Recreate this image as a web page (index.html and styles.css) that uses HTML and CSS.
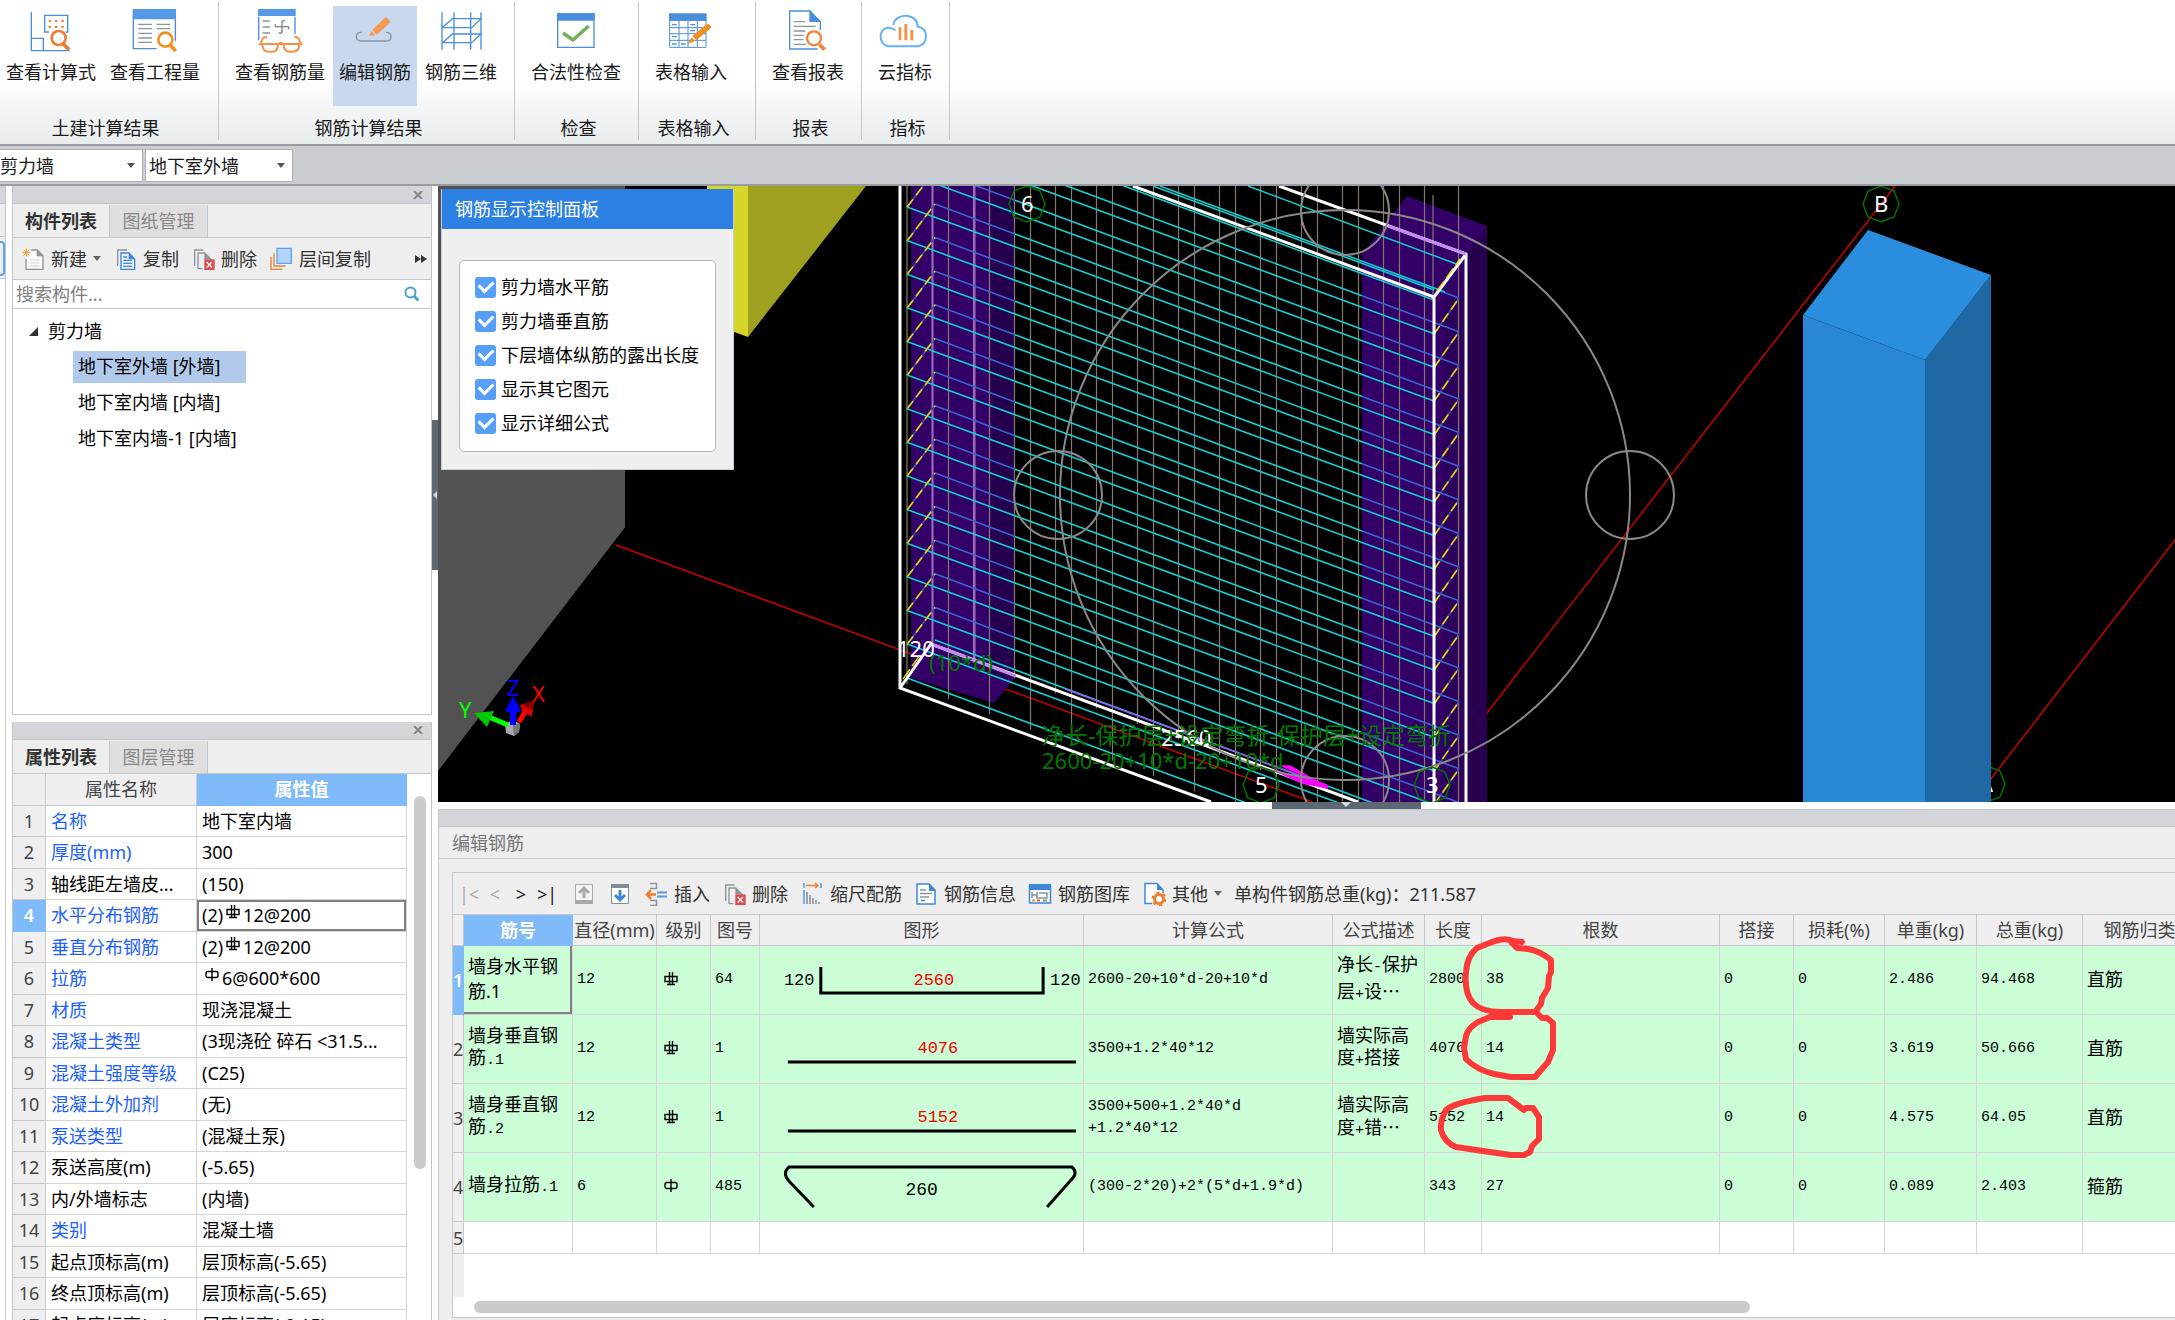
FILE: index.html
```html
<!DOCTYPE html>
<html lang="zh-CN">
<head>
<meta charset="utf-8">
<title>编辑钢筋</title>
<link rel="stylesheet" href="styles.css">
</head>
<body>
<svg class="defs" aria-hidden="true">
  <defs>
    <symbol id="bar-c" viewBox="0 0 14 16"><path d="M1 5.500H13V10.500H1ZM5.500 1V13.500M8.500 1V13.500M3 13.500H11" fill="none" stroke="#000" stroke-width="1.400"/></symbol>
    <symbol id="bar-a" viewBox="0 0 14 16"><rect x="1" y="4.500" width="12" height="6" rx="2" fill="none" stroke="#000" stroke-width="1.400"/><path d="M7 1V14" stroke="#000" stroke-width="1.400"/></symbol>
    <symbol id="delete" viewBox="573 201 72 72"><path d="M584 258V210H610M594 266V219H614L633 238V246M594 266H608" fill="none" stroke="#8b959c" stroke-width="4"/><path d="M613 217V238H633Z" fill="#8b959c"/><rect x="613" y="238" width="31" height="32" fill="#dc4b50"/><path d="M620 246L636 263M636 246L620 263" stroke="#fff" stroke-width="4"/></symbol>
  </defs>
</svg>
<div class="app">
  <header class="ribbon">
    <section class="group first">
      <div class="tools">
        <button class="tool"><svg viewBox="90 24 132 132"><path d="M97 36V152H212M97 115H133V152" fill="none" stroke="#4a8edb" stroke-width="4"/><path d="M150 96H137V46H206V96H200" fill="none" stroke="#4a8edb" stroke-width="4"/><path d="M149 60h7v6h-7zM168 60h7v6h-7zM187 60h7v6h-7zM149 78h7v6h-7zM168 78h7v6h-7zM187 78h7v6h-7z" fill="#ef7d32"/><circle cx="179" cy="114" r="21" fill="none" stroke="#ef7d32" stroke-width="8"/><path d="M193 132L210 149" stroke="#ef7d32" stroke-width="11"/></svg>查看计算式</button>
        <button class="tool"><svg viewBox="402 24 132 132"><path d="M403 50V146H473M529 50V122" fill="none" stroke="#4a8edb" stroke-width="4"/><path d="M401 27H531V58H401Z" fill="#5598e6"/><path d="M418 73H459M418 86H459M418 100H459M418 114H459M418 127H459M473 73H513M473 86H513" stroke="#8b959c" stroke-width="4"/><circle cx="499" cy="119" r="21" fill="#fff" stroke="#ef9020" stroke-width="8"/><path d="M514 136L530 153" stroke="#ef9020" stroke-width="11"/></svg>查看工程量</button>
      </div>
      <h2>土建计算结果</h2>
    </section>
    <section class="group">
      <div class="tools">
        <button class="tool"><svg viewBox="774 24 132 132"><path d="M776 50V120M885 50V102" stroke="#4a8edb" stroke-width="4"/><path d="M774 27H887V48H774Z" fill="#5598e6"/><path d="M788 63H810M788 81H810M788 99H810" stroke="#8b959c" stroke-width="4"/><path d="M854 64Q846 58 846 70V98M826 72Q824 82 834 80H860Q868 78 866 88M846 90Q846 104 836 98" fill="none" stroke="#75828a" stroke-width="4"/><path d="M801 111Q787 110 786 122L780 132H904L898 122Q897 110 883 111M787 134Q787 155 807 155H818Q833 155 834 134M851 134Q851 155 871 155H880Q897 154 898 134M833 134Q842 124 852 134" fill="none" stroke="#f5924a" stroke-width="6"/></svg>查看钢筋量</button>
        <button class="tool active"><svg viewBox="1059 24 132 132"><path d="M1086 97Q1069 96 1069 110Q1069 123 1086 123H1158Q1173 123 1173 110Q1173 97 1158 97" fill="none" stroke="#8b959c" stroke-width="4"/><path d="M1107 108L1114 93L1126 105ZM1117 90L1154 54Q1158 51 1162 55L1169 62Q1172 66 1169 69L1130 104Z" fill="#f59a52"/></svg>编辑钢筋</button>
        <button class="tool"><svg viewBox="1317 24 132 132"><path d="M1326 37V149M1362 37V149M1412 37V149M1443 37V149M1326 83L1357 56H1443L1415 83ZM1328 128L1357 102H1443L1415 128Z" fill="none" stroke="#4a8edb" stroke-width="4"/></svg>钢筋三维</button>
      </div>
      <h2>钢筋计算结果</h2>
    </section>
    <section class="group">
      <div class="tools"><button class="tool"><svg viewBox="225 24 132 132"><path d="M236 42H345V142H236Z" fill="#fff" stroke="#4a8edb" stroke-width="4"/><path d="M234 40H347V62H234Z" fill="#4a8edb"/><path d="M252 99L282 120L329 78" fill="none" stroke="#77b05c" stroke-width="11"/></svg>合法性检查</button></div>
      <h2>检查</h2>
    </section>
    <section class="group wide">
      <div class="tools"><button class="tool"><svg viewBox="567 24 132 132"><path d="M569 61H678V142H569ZM569 83H678M569 101H678M569 121H678M597 61V142M624 61V142M652 61V142" fill="none" stroke="#4a8edb" stroke-width="3"/><path d="M567 40H680V62H567Z" fill="#4a8edb"/><path d="M576 74H590M631 74H645M576 110H590M576 132H590M603 132H617M631 92H645" stroke="#4a8edb" stroke-width="4"/><path d="M624 131L634 112L646 123Z M637 108L678 74Q684 69 690 75T690 86L649 121Z" fill="#ef9020"/></svg>表格输入</button></div>
      <h2>表格输入</h2>
    </section>
    <section class="group">
      <div class="tools"><button class="tool"><svg viewBox="918 24 132 132"><path d="M1013 147H929V33H990L1021 65V90" fill="#fff" stroke="#4a8edb" stroke-width="4"/><path d="M988 31V66H1023Z" fill="#4a8edb"/><path d="M941 65H976M941 79H1007M941 93H976M941 106H971M941 119H971M941 133H978" stroke="#8b959c" stroke-width="4"/><circle cx="1002" cy="115" r="21" fill="#fff" stroke="#f0833c" stroke-width="7"/><path d="M1018 134L1034 149" stroke="#f0833c" stroke-width="11"/></svg>查看报表</button></div>
      <h2>报表</h2>
    </section>
    <section class="group">
      <div class="tools"><button class="tool"><svg viewBox="1206 24 132 132"><path d="M1243 91Q1228 80 1213 85Q1198 92 1199 112Q1201 134 1222 139H1310Q1335 134 1335 108Q1334 82 1310 80Q1310 52 1277 47Q1243 46 1236 75" fill="none" stroke="#66b0fb" stroke-width="6"/><path d="M1253 81H1261V121H1253ZM1270 72H1279V121H1270ZM1288 90H1297V121H1288Z" fill="#f5924a"/></svg>云指标</button></div>
      <h2>指标</h2>
    </section>
  </header>

  <div class="selectors">
    <label class="picker"><select aria-label="构件类型"><option>剪力墙</option></select></label>
    <label class="picker named"><select aria-label="构件名称"><option>地下室外墙</option></select></label>
  </div>

  <div class="workspace">
    <div class="edge"><i class="strip"></i><i class="edge-tabs"></i><i class="edge-tools"></i></div>

    <aside class="side">
      <section class="panel components">
        <div class="strip"><button class="close" aria-label="关闭"><svg viewBox="0 0 10 8"><path d="M1 0L9 8M9 0L1 8" stroke="#858585" stroke-width="2"/></svg></button></div>
        <nav class="tabs"><button class="tab on">构件列表</button><button class="tab">图纸管理</button></nav>
        <div class="side-tools">
          <button class="cmd"><svg viewBox="63 201 72 72"><path d="M94 210H112L129 227V268H78V236" fill="#f8f8f8" stroke="#8b959c" stroke-width="4"/><path d="M110 208V229H131Z" fill="#8b959c"/><path d="M88 240H118M88 249H118M88 258H118" stroke="#d5d8da" stroke-width="3"/><path d="M79 206V230M67 218H91M70 209L88 227M88 209L70 227" stroke="#fb9d2c" stroke-width="3"/></svg>新建<i class="caret"></i></button>
          <button class="cmd"><svg viewBox="339 201 72 72"><path d="M353 258V210H381" fill="none" stroke="#8b959c" stroke-width="4"/><path d="M363 219H387L404 237V268H363Z" fill="#e6f1fd" stroke="#3f86d8" stroke-width="4"/><path d="M386 218V238H405Z" fill="#3f86d8"/><path d="M370 231H381M370 241H396M370 250H396M370 259H396" stroke="#3f86d8" stroke-width="4"/></svg>复制</button>
          <button class="cmd"><svg><use href="#delete"/></svg>删除</button>
          <button class="cmd"><svg viewBox="810 201 72 72"><path d="M816 230V268H850M825 220V258H860" fill="none" stroke="#ef7d32" stroke-width="4"/><path d="M834 205H877V250H834Z" fill="#b3d5fb" stroke="#5aa2f2" stroke-width="4"/></svg>层间复制</button>
          <button class="more" aria-label="更多"><svg viewBox="0 0 12 8"><path d="M0 0L6 4L0 8ZM6 0L12 4L6 8Z" fill="#333"/></svg></button>
        </div>
        <label class="search"><input type="text" placeholder="搜索构件..." aria-label="搜索构件"><svg viewBox="0 0 16 16"><circle cx="6.500" cy="6.500" r="5" fill="none" stroke="#4fa0d0" stroke-width="2"/><path d="M10 10L14.500 14.500" stroke="#4fa0d0" stroke-width="3"/></svg></label>
        <div class="tree">
          <div class="node root"><svg viewBox="0 0 9 9"><path d="M9 0V9H0Z" fill="#333"/></svg>剪力墙</div>
          <div class="node leaf selected"><span>地下室外墙 [外墙]</span></div>
          <div class="node leaf"><span>地下室内墙 [内墙]</span></div>
          <div class="node leaf"><span>地下室内墙-1 [内墙]</span></div>
        </div>
      </section>

      <section class="panel properties">
        <div class="strip"><button class="close" aria-label="关闭"><svg viewBox="0 0 10 8"><path d="M1 0L9 8M9 0L1 8" stroke="#858585" stroke-width="2"/></svg></button></div>
        <nav class="tabs"><button class="tab on">属性列表</button><button class="tab">图层管理</button></nav>
        <div class="prop-body">
          <table class="props">
            <colgroup><col class="p-idx"><col class="p-name"><col></colgroup>
            <thead><tr><th></th><th>属性名称</th><th class="hot">属性值</th></tr></thead>
            <tbody>
              <tr><th>1</th><td class="key">名称</td><td>地下室内墙</td></tr>
              <tr><th>2</th><td class="key">厚度(mm)</td><td>300</td></tr>
              <tr><th>3</th><td>轴线距左墙皮...</td><td>(150)</td></tr>
              <tr><th class="hot">4</th><td class="key">水平分布钢筋</td><td class="current">(2)<svg class="grade"><use href="#bar-c"/></svg>12@200</td></tr>
              <tr><th>5</th><td class="key">垂直分布钢筋</td><td>(2)<svg class="grade"><use href="#bar-c"/></svg>12@200</td></tr>
              <tr><th>6</th><td class="key">拉筋</td><td><svg class="grade"><use href="#bar-a"/></svg>6@600*600</td></tr>
              <tr><th>7</th><td class="key">材质</td><td>现浇混凝土</td></tr>
              <tr><th>8</th><td class="key">混凝土类型</td><td>(3现浇砼 碎石 &lt;31.5...</td></tr>
              <tr><th>9</th><td class="key">混凝土强度等级</td><td>(C25)</td></tr>
              <tr><th>10</th><td class="key">混凝土外加剂</td><td>(无)</td></tr>
              <tr><th>11</th><td class="key">泵送类型</td><td>(混凝土泵)</td></tr>
              <tr><th>12</th><td>泵送高度(m)</td><td>(-5.65)</td></tr>
              <tr><th>13</th><td>内/外墙标志</td><td>(内墙)</td></tr>
              <tr><th>14</th><td class="key">类别</td><td>混凝土墙</td></tr>
              <tr><th>15</th><td>起点顶标高(m)</td><td>层顶标高(-5.65)</td></tr>
              <tr><th>16</th><td>终点顶标高(m)</td><td>层顶标高(-5.65)</td></tr>
              <tr><th>17</th><td>起点底标高(m)</td><td>层底标高(-9.15)</td></tr>
            </tbody>
          </table>
          <div class="v-track"><div class="v-thumb"></div></div>
        </div>
      </section>
    </aside>

    <div class="splitter"><button aria-label="收起侧栏"><svg viewBox="0 0 6 10"><path d="M5 1V9L1 5Z" fill="#d5d9dd"/></svg></button></div>

    <main class="content">
      <div class="viewport">
        <svg class="scene" viewBox="438 186 1737 616" preserveAspectRatio="xMinYMin slice">
          <defs>
            <g id="hoop">
              <path d="M935 204L1015 234M1362 363L1459 399" stroke="#3a66d0"/>
              <path d="M1015 234L1362 363M907 207L1434 401" stroke="#12cfd2"/>
              <path d="M907 241L935 204M1434 435L1459 399" stroke="#46549c"/>
              <path d="M907 241L935 204M1434 435L1459 399" stroke="#e6d80c" stroke-dasharray="10 5"/>
            </g>
            <g id="hoops4"><use href="#hoop"/><use href="#hoop" y="33.600"/><use href="#hoop" y="67.200"/><use href="#hoop" y="100.900"/></g>
            <path id="bar" d="M948.500 -400V699M932.500 -400V647"/>
            <g id="bars4"><use href="#bar"/><use href="#bar" x="41" y="15.400"/><use href="#bar" x="82" y="30.800"/><use href="#bar" x="123" y="46.200"/></g>
            <path id="bubble" d="M0 -18L13 -13L18 0L13 13L0 18L-13 13L-18 0L-13 -13Z" fill="none" stroke="#007200" stroke-width="1.500"/>
            <clipPath id="wall"><path d="M899 186H1133L1434 296L1466 254V802H899Z"/></clipPath>
          </defs>
          <path d="M438 186H625V527L438 771Z" fill="#525252"/><path d="M592 186H625V527L592 570Z" fill="#545454"/>
          <path d="M707 186H748V337L707 322Z" fill="#d6d62a"/><path d="M748 186H866L748 337Z" fill="#a0a020"/>
          <g stroke="#c80000" stroke-width="1.500"><path d="M616 545L1312 802M1895 186L1418 802M2175 540L1987 784"/></g>
          <use href="#bubble" x="1987" y="784"/><text x="1979" y="792" class="axis">A</text>
          <path d="M1803 315L1925 360V802H1803Z" fill="#2a87d5"/><path d="M1925 360L1991 275V802H1925Z" fill="#2068a3"/><path d="M1868 230L1991 275L1925 360L1803 315Z" fill="#2b8ddd"/>
          <g opacity="0.930">
            <path d="M911 186H1015V678L994 703L911 678Z" fill="#370070"/><path d="M991 186H1015V678H991Z" fill="#280054"/>
            <path d="M1407 196L1487 226V802H1362V254Z" fill="#370070"/><path d="M1466 254L1487 226V802H1466Z" fill="#2a0055"/><path d="M1443 300H1466V802H1443Z" fill="#300062"/>
          </g>
          <g stroke="#85786f" stroke-width="1.200" fill="none">
            <use href="#bars4"/><use href="#bars4" x="164" y="61.600"/><use href="#bars4" x="328" y="123.200"/>
            <path d="M907 186V684M1424.500 186V802M1433 195V300M1458.500 186V802"/>
          </g>
          <path d="M932.500 186V645M974.500 186V662" stroke="#a069c8" stroke-width="2"/>
          <g stroke-width="1.600" fill="none" clip-path="url(#wall)">
            <use href="#hoops4" y="-100.900"/><use href="#hoops4" y="33.600"/><use href="#hoops4" y="168.100"/><use href="#hoops4" y="302.600"/><path d="M935 640L1459 835M907 644L1434 838M907 678L1434 872" stroke="#12cfd2"/>
          </g>
          <path d="M1248 186L1459 265M1153 186L1434 290M1160 186L1445 292" stroke="#12cfd2" stroke-width="1.500"/>
          <g stroke="#fff" stroke-width="3" fill="none">
            <path d="M900 186V688L1211 802M900 688L931 644L1358 802M1133 186L1434 297V802M1279 186L1466 254V802M1434 297L1466 254"/>
          </g>
          <path d="M931 644L1016 676M1388 226L1466 254" stroke="#c48cf0" stroke-width="3"/>
          <path d="M1437 291L1460 259M903 679L920 655" stroke="#e6d80c" stroke-width="1.500" stroke-dasharray="12 4"/>
          <path d="M1065 689L1328 786" stroke="#9b55f5" stroke-width="1.500"/><path d="M1282 766L1328 786L1274 770L1302 783L1328 788L1290 766Z" fill="#f0f" stroke="#f0f" stroke-width="1.500"/>
          <g fill="none" stroke="#898989" stroke-width="2"><circle cx="1345" cy="495" r="285"/><circle cx="1058" cy="495" r="44"/><circle cx="1630" cy="495" r="44"/><circle cx="1345" cy="211" r="44"/><circle cx="1345" cy="780" r="44"/></g>
          <use href="#bubble" x="1027" y="204"/><use href="#bubble" x="1261" y="785"/><use href="#bubble" x="1432" y="785"/><use href="#bubble" x="1881" y="204"/>
          <text x="1021" y="212" class="axis">6</text><text x="1255" y="793" class="axis">5</text><text x="1426" y="793" class="axis">3</text><text x="1874" y="212" class="axis">B</text>
          <text x="897" y="657" class="dim">120</text><text x="1161" y="746" class="dim">2560</text>
          <text x="929" y="671" class="note">(10*d)</text><text x="1042" y="744" class="note desc">净长-保护层+设定弯折-保护层+设定弯折</text><text x="1042" y="769" class="note">2600-20+10*d-20+10*d</text>
          <path d="M505 724L513 720L520 724L519 732L514 736L506 733Z" fill="#a8a8a8"/><path d="M513 723L520 724L519 732L514 736Z" fill="#777"/>
          <path d="M508 725L484 715" stroke="#0f0" stroke-width="5"/><path d="M474 713L494 711L487 727Z" fill="#00c800"/>
          <path d="M519 722L526 710" stroke="#f00" stroke-width="5"/><path d="M520 705L534 701L532 716Q522 714 520 705Z" fill="#e00000"/><path d="M522 705L535 700L533 710Z" fill="#850000"/>
          <path d="M513 725V707" stroke="#00f" stroke-width="6"/><path d="M505 711L513 696L521 711Q513 715 505 711Z" fill="#00f"/>
          <text x="507" y="696" class="axis blue">Z</text><text x="532" y="702" class="axis red">X</text><text x="459" y="718" class="axis green">Y</text>
        </svg>
        <section class="float">
          <h3>钢筋显示控制面板</h3>
          <div class="float-body"><div class="checks">
            <label><input type="checkbox" checked>剪力墙水平筋</label>
            <label><input type="checkbox" checked>剪力墙垂直筋</label>
            <label><input type="checkbox" checked>下层墙体纵筋的露出长度</label>
            <label><input type="checkbox" checked>显示其它图元</label>
            <label><input type="checkbox" checked>显示详细公式</label>
          </div></div>
        </section>
      </div>
      <div class="h-splitter"><button aria-label="收起编辑区"><svg viewBox="0 0 10 6"><path d="M0 0H10L5 5Z" fill="#d5d9dd"/></svg></button></div>
      <section class="editor">
        <div class="strip"></div>
        <h3 class="editor-title">编辑钢筋</h3>
        <div class="editor-body">
          <div class="frame">
            <div class="grid-tools">
              <div class="pager"><button disabled>|&lt;</button><button disabled>&lt;</button><button>&gt;</button><button>&gt;|</button></div>
              <button class="cmd" aria-label="上移"><svg viewBox="0 0 24 24"><path d="M3.500 2.500H20.500V21.500H3.500Z" fill="#f4f4f4" stroke="#a9a9a9"/><path d="M3 18H21V22H3Z" fill="#a9a9a9"/><path d="M12 16V6M7 11L12 6L17 11" fill="none" stroke="#a9a9a9" stroke-width="3"/></svg></button>
              <button class="cmd" aria-label="下移"><svg viewBox="0 0 24 24"><path d="M3.500 2.500H20.500V21.500H3.500Z" fill="#fff" stroke="#7e8d96"/><path d="M3 2H21V6H3Z" fill="#7e8d96"/><path d="M12 8V18M7 13L12 18L17 13" fill="none" stroke="#3d86dc" stroke-width="3"/></svg></button>
              <button class="cmd"><svg viewBox="0 0 24 24"><path d="M6 1.500H12.500V6.500H6M6 18.500H12.500V23.500H6" fill="none" stroke="#8b959c" stroke-width="1.500"/><path d="M13 10.500H23M13 14.500H23" stroke="#5598e6" stroke-width="2"/><path d="M12 12.500H3M7 8L3 12.500L7 17" fill="none" stroke="#ef7d32" stroke-width="2.500"/></svg>插入</button>
              <button class="cmd"><svg><use href="#delete"/></svg>删除</button>
              <button class="cmd"><svg viewBox="0 0 24 24"><path d="M4 1V6M21 1V6M4 8V22" stroke="#5598e6" stroke-width="1.500"/><path d="M7 10V22M10 13V22M13 16V22M16 18V22M19 20V22" stroke="#7e8d96" stroke-width="1.500"/><path d="M6 3.500H18M15 1L18 3.500L15 6" fill="none" stroke="#ef7d32" stroke-width="1.500"/></svg>缩尺配筋</button>
              <button class="cmd"><svg viewBox="0 0 24 24"><path d="M3 2H15L21 8V22H3Z" fill="#fff" stroke="#3f86d8" stroke-width="1.500"/><path d="M15 1V9H22Z" fill="#3f86d8"/><path d="M6 8H12M6 11.500H18M6 15H15" stroke="#8b959c" stroke-width="1.500"/><path d="M7 18.500H11" stroke="#3f86d8" stroke-width="1.500"/></svg>钢筋信息</button>
              <button class="cmd"><svg viewBox="0 0 24 24"><path d="M1.500 3H22.500V21H1.500Z" fill="#fff" stroke="#3f86d8" stroke-width="1.500"/><path d="M1 2H23V8H1Z" fill="#3f86d8"/><path d="M4 10V16M4 13H9M9 10V16H19V11H11" fill="none" stroke="#8b959c" stroke-width="1.500"/><path d="M4 18.500H7" stroke="#f0a020" stroke-width="2"/><path d="M9 18.500H12" stroke="#e65050" stroke-width="2"/><path d="M15 18.500H19" stroke="#58b058" stroke-width="2"/></svg>钢筋图库</button>
              <button class="cmd"><svg viewBox="0 0 24 24"><path d="M10 21.500H3V1.500H15L21 8V11" fill="#fff" stroke="#3f86d8" stroke-width="1.500"/><path d="M15 1V8H21Z" fill="#3f86d8"/><circle cx="17" cy="17" r="4.500" fill="#fff" stroke="#ef7d32" stroke-width="3"/><circle cx="17" cy="17" r="6.500" fill="none" stroke="#ef7d32" stroke-width="2" stroke-dasharray="3 3.800"/></svg>其他<i class="caret"></i></button>
              <output>单构件钢筋总重(kg)：211.587</output>
            </div>
            <div class="grid-wrap">
              <table class="bars">
                <colgroup><col class="c-idx"><col class="c-name"><col class="c-dia"><col class="c-grade"><col class="c-no"><col class="c-shape"><col class="c-formula"><col class="c-desc"><col class="c-len"><col class="c-count"><col class="c-lap"><col class="c-loss"><col class="c-unit"><col class="c-total"><col></colgroup>
                <thead><tr><th></th><th class="hot">筋号</th><th>直径(mm)</th><th>级别</th><th>图号</th><th>图形</th><th>计算公式</th><th>公式描述</th><th>长度</th><th>根数</th><th>搭接</th><th>损耗(%)</th><th>单重(kg)</th><th>总重(kg)</th><th>钢筋归类</th></tr></thead>
                <tbody>
                  <tr><th class="hot">1</th><td class="zh current">墙身水平钢<br>筋.1</td><td>12</td><td class="mark"><svg class="grade"><use href="#bar-c"/></svg></td><td>64</td>
                    <td class="shape"><svg viewBox="0 0 324 68"><path d="M61 21V47H284V21" fill="none" stroke="#000" stroke-width="3"/><text x="24" y="39">120</text><text x="291" y="39">120</text><text x="154" y="39" class="len">2560</text></svg></td>
                    <td>2600-20+10*d-20+10*d</td><td class="zh">净长<span>-</span>保护<br>层<span>+</span>设<b>…</b></td><td>2800</td><td>38</td><td>0</td><td>0</td><td>2.486</td><td>94.468</td><td class="zh">直筋</td></tr>
                  <tr><th>2</th><td class="zh">墙身垂直钢<br>筋<span>.1</span></td><td>12</td><td class="mark"><svg class="grade"><use href="#bar-c"/></svg></td><td>1</td>
                    <td class="shape"><svg viewBox="0 0 324 68"><path d="M28 47H317" stroke="#000" stroke-width="3"/><text x="158" y="38" class="len">4076</text></svg></td>
                    <td>3500+1.2*40*12</td><td class="zh">墙实际高<br>度<span>+</span>搭接</td><td>4076</td><td>14</td><td>0</td><td>0</td><td>3.619</td><td>50.666</td><td class="zh">直筋</td></tr>
                  <tr><th>3</th><td class="zh">墙身垂直钢<br>筋<span>.2</span></td><td>12</td><td class="mark"><svg class="grade"><use href="#bar-c"/></svg></td><td>1</td>
                    <td class="shape"><svg viewBox="0 0 324 68"><path d="M28 47H317" stroke="#000" stroke-width="3"/><text x="158" y="38" class="len">5152</text></svg></td>
                    <td>3500+500+1.2*40*d<br>+1.2*40*12</td><td class="zh">墙实际高<br>度<span>+</span>错<b>…</b></td><td>5152</td><td>14</td><td>0</td><td>0</td><td>4.575</td><td>64.05</td><td class="zh">直筋</td></tr>
                  <tr><th>4</th><td class="zh">墙身拉筋<span>.1</span></td><td>6</td><td class="mark"><svg class="grade"><use href="#bar-a"/></svg></td><td>485</td>
                    <td class="shape"><svg viewBox="0 0 324 68"><path d="M54 54L29 28Q22 20 29 14H313Q320 20 311 28L288 54" fill="none" stroke="#000" stroke-width="3"/><text x="146" y="42" class="plain">260</text></svg></td>
                    <td>(300-2*20)+2*(5*d+1.9*d)</td><td></td><td>343</td><td>27</td><td>0</td><td>0</td><td>0.089</td><td>2.403</td><td class="zh">箍筋</td></tr>
                  <tr class="empty"><th>5</th><td></td><td></td><td></td><td></td><td></td><td></td><td></td><td></td><td></td><td></td><td></td><td></td><td></td><td></td></tr>
                </tbody>
              </table>
              <div class="blank"></div>
              <svg class="marks" viewBox="1433 930 130 235"><path d="M1522 942L1513 941Q1504 937 1492 942L1477 948Q1467 956 1466 972Q1464 993 1473 1003Q1482 1012 1500 1012L1535 1012L1541 1004L1542 998L1548 988L1549 976L1551 972V960Q1540 951 1528 949L1517 948L1512 943"/><path d="M1510 1017H1490L1478 1022Q1468 1028 1466 1036L1464 1048L1466 1059Q1477 1070 1494 1074L1511 1077H1535L1541 1070L1548 1062L1553 1050V1023L1547 1018L1542 1018L1536 1012"/><path d="M1524 1110L1508 1098H1485Q1454 1103 1446 1110Q1440 1120 1441 1130Q1444 1142 1456 1147L1483 1151L1511 1155H1524L1530 1152L1532 1146L1539 1139V1117L1533 1108L1526 1108"/></svg>
            </div>
            <div class="h-track"><div class="h-thumb"></div></div>
          </div>
        </div>
      </section>
    </main>
  </div>
</div>
</body>
</html>
```
FILE: styles.css
```css
* { box-sizing: border-box; }
body {
  margin: 0;
  font: 18px/24px "Noto Sans", "Noto Sans CJK SC", sans-serif;
  color: #1a1a1a;
  background: #fff;
}
button, input, select { font: inherit; color: inherit; margin: 0; }
button { padding: 0; border: 0; background: none; white-space: nowrap; }
h2, h3 { margin: 0; font-size: 18px; font-weight: 400; }
svg { display: block; }
.defs { position: absolute; width: 0; height: 0; }

.app { display: flex; flex-direction: column; height: 100vh; overflow: hidden; }

/* Ribbon */
.ribbon {
  display: flex;
  flex: none;
  border-bottom: 2px solid #999ca1;
  background: linear-gradient(#fff 55%, #e7ecec);
}
.group {
  display: flex;
  flex-direction: column;
  gap: 10px;
  margin: 2px 0 4px;
  padding: 4px 11px 0 10px;
  border-right: 1px solid #c3c6c8;
}
.group.first { padding-left: 0; padding-right: 12px; }
.group.wide { padding-right: 22px; }
.tools { display: flex; gap: 2px; }
.tool {
  display: flex;
  flex-direction: column;
  align-items: center;
  gap: 8px;
  height: 100px;
  padding: 2px 6px 0;
}
.tool svg { width: 44px; height: 44px; overflow: visible; }
.tool.active { background: #c8d8ef; }
.group h2 { padding-left: 5px; text-align: center; }

.selectors {
  display: flex;
  flex: none;
  gap: 2px;
  padding: 3px 0 2px;
  border-bottom: 2px solid #999ca1;
  background: #c9ccd1;
}
.picker { position: relative; width: 143px; }
.picker.named { width: 148px; }
.picker select {
  appearance: none;
  width: 100%;
  height: 33px;
  padding: 0;
  border: 1px solid #b0b2b5;
  border-left: 0;
  border-radius: 0;
  background: #fff;
}
.picker.named select { padding-left: 3px; border-left: 1px solid #b0b2b5; }
.picker::after {
  content: "";
  position: absolute;
  right: 8px;
  top: 14px;
  border: 4px solid transparent;
  border-top: 5px solid #555;
  border-bottom: 0;
}

/* Workspace */
.workspace { display: flex; flex: 1; min-height: 0; }
.edge { flex: none; width: 6px; margin-right: 6px; border-right: 1px solid #c4c8cc; }
.edge i { display: block; }
.edge-tabs { height: 33px; border-bottom: 1px solid #c4c8cc; background: #eee; }
.edge-tools { height: 42px; padding: 4px 0; border-bottom: 1px solid #c4c8cc; background: #eee; }
.edge-tools::after { content: ""; display: block; height: 31px; border: 2px solid #5aa2f2; border-left: 0; border-radius: 0 4px 4px 0; }
.strip { flex: none; height: 18px; border-bottom: 1px solid #c0c5ca; background: #d4d5da; }

.side { display: flex; flex: none; flex-direction: column; gap: 7px; width: 420px; }
.panel { display: flex; flex-direction: column; min-height: 0; border: 1px solid #c0c3c7; border-top: 0; }
.components { flex: 528 0 0; }
.properties { flex: 599 0 0; border-bottom: 0; overflow: hidden; }
.panel .strip { display: flex; justify-content: flex-end; align-items: center; padding-right: 8px; }
.close svg { width: 10px; height: 8px; }
.tabs { display: flex; flex: none; height: 34px; padding-top: 1px; border-bottom: 1px solid #c4c8cc; background: #eee; }
.tab { width: 98px; border-right: 1px solid #c4c8cc; color: #888; background: #dfdfdf; }
.tab.on { width: 97px; font-weight: 600; color: #333; background: #eee; }
.side-tools { display: flex; flex: none; align-items: center; gap: 12px; height: 42px; padding: 0 4px 0 8px; border-bottom: 1px solid #c4c8cc; background: #eee; }
.cmd { display: flex; align-items: center; gap: 6px; color: #333; }
.cmd svg { flex: none; width: 24px; height: 24px; }
.caret { border: 4px solid transparent; border-top: 5px solid #666; border-bottom: 0; }
.more { margin-left: auto; }
.more svg { width: 12px; height: 8px; }
.search { display: flex; flex: none; align-items: center; height: 29px; padding: 0 11px 0 3px; border-bottom: 1px solid #c4c8cc; }
.search input { flex: 1; min-width: 0; height: 26px; padding: 0; border: 0; outline: 0; background: none; }
.search input::placeholder { color: #808080; opacity: 1; }
.search svg { width: 16px; height: 16px; }
.tree { padding: 4px 0; color: #000; }
.node { display: flex; align-items: center; height: 36px; }
.root { gap: 10px; padding-left: 16px; }
.root svg { width: 9px; height: 9px; }
.leaf { padding-left: 60px; }
.leaf span { height: 32px; padding: 0 5px; line-height: 31px; }
.selected span { min-width: 173px; background: #b1caec; }

.prop-body { display: flex; min-height: 0; }
.props { flex: none; width: 394px; border-spacing: 0; table-layout: fixed; color: #000; align-self: flex-start; }
.p-idx { width: 33px; }
.p-name { width: 151px; }
.props th, .props td { height: 31px; padding: 0; border: solid #d4d4d4; border-width: 0 1px 1px 0; white-space: nowrap; overflow: hidden; }
.props tbody tr:nth-child(even) > * { height: 32px; }
.props thead th { height: 32px; }
.props th { font-weight: 400; color: #444; background: #efefef; border-color: #c8c8c8; }
.props td { padding-left: 5px; }
.props .key { color: #2060ff; }
.props .hot, .bars .hot { color: #fff; background: #7fbafa; border-color: #7fbafa; font-weight: 600; }
.props .current { box-shadow: inset 0 0 0 2px #808080; }
.grade { display: inline-block; width: 14px; height: 16px; margin: 0 3px; vertical-align: 2px; }
.v-track { flex: 1; padding: 22px 5px 0 7px; }
.v-thumb { height: 373px; border-radius: 6px; background: #cbcbcb; }

.splitter { display: flex; flex: none; width: 6px; padding-top: 234px; }
.splitter button { display: flex; align-items: center; width: 6px; height: 150px; background: #5e6873; }
.splitter svg { width: 6px; height: 10px; }

.content { display: flex; flex: 1; flex-direction: column; min-width: 0; }

/* 3D view */
.viewport { position: relative; flex: 1; min-height: 0; overflow: hidden; background: #000; }
.scene { width: 100%; height: 100%; }
.axis, .dim, .note { font-size: 22px; fill: #fff; }
.note { fill: #007a00; }
.note.desc { font-size: 23px; }
.axis.blue { fill: #00f; }
.axis.red { fill: #f00; }
.axis.green { fill: #0f0; }
.float { position: absolute; left: 3px; top: 3px; width: 293px; border: 1px solid #c5d0dc; border-top: 0; background: #efefef; }
.float h3 { padding: 8px 13px; color: #fff; background: #2c80e1; }
.float-body { padding: 31px 17px 17px; }
.checks { display: flex; flex-direction: column; gap: 10px; padding: 14px 15px 16px; border: 1px solid #b8b8b8; border-radius: 5px; background: #fff; color: #000; }
.checks label { display: flex; align-items: center; gap: 5px; white-space: nowrap; }
.checks input { display: grid; place-items: center; flex: none; appearance: none; width: 21px; height: 21px; border-radius: 3px; background: #559ff8; }
.checks input::before { content: ""; width: 11px; height: 7px; border: solid #fff; border-width: 0 0 3px 3px; transform: rotate(-45deg); margin-bottom: 4px; }

.h-splitter { display: flex; flex: none; height: 7px; padding-left: 48%; }
.h-splitter button { display: flex; justify-content: center; flex: none; width: 149px; height: 7px; background: #5e6873; }
.h-splitter svg { width: 10px; height: 6px; }

/* Rebar editor */
.editor { flex: none; border-left: 1px solid #c4c8cc; background: #eee; }
.editor .strip { border-top: 1px solid #c4c8cc; }
.editor-title { padding: 4px 13px 3px; border-bottom: 1px solid #c4c8cc; color: #777; }
.editor-body { padding: 13px 0 2px 13px; }
.frame { border: solid #c4c8cc; border-width: 1px 0 1px 1px; background: #fff; overflow: hidden; }
.grid-tools { display: flex; align-items: center; gap: 12px; height: 42px; padding-left: 3px; border-bottom: 1px solid #c4c8cc; background: #eee; }
.pager { display: flex; }
.pager button { width: 26px; }
.pager button:disabled { color: #aaa; }
.grid-tools output { color: #333; white-space: nowrap; }
.grid-wrap { position: relative; }
.bars { width: calc(100% + 22px); border-spacing: 0; table-layout: fixed; color: #000; font: 15px/22px "Liberation Mono", "Noto Sans CJK SC", monospace; }
.c-idx { width: 11px; }
.c-name { width: 109px; }
.c-dia { width: 84px; }
.c-grade { width: 54px; }
.c-no { width: 49px; }
.c-shape { width: 324px; }
.c-formula { width: 249px; }
.c-desc { width: 92px; }
.c-len { width: 57px; }
.c-count { width: 238px; }
.c-lap { width: 74px; }
.c-loss { width: 91px; }
.c-unit { width: 92px; }
.c-total { width: 106px; }
.bars th { height: 31px; padding: 0; border: solid #c8c8c8; border-width: 0 1px 1px 0; font: 18px/24px "Noto Sans", "Noto Sans CJK SC", sans-serif; color: #444; background: #efefef; white-space: nowrap; }
.bars td { height: 69px; padding: 0 0 0 4px; border: solid #d5d5d5; border-width: 0 1px 1px 0; background: #cbfdd7; white-space: nowrap; }
.bars .zh { padding-bottom: 2px; font: 18px/22px "Noto Sans", "Noto Sans CJK SC", sans-serif; }
.bars .zh span { font-family: "Liberation Mono", monospace; font-size: 15px; }
.bars .zh b { font-family: "Noto Sans CJK SC", sans-serif; font-weight: 400; }
.bars .zh.current { line-height: 25px; box-shadow: inset -2px -2px 0 #808080; }
.bars .grade { vertical-align: middle; }
.bars .shape { padding: 0; }
.shape svg { width: 323px; height: 68px; }
.shape text { font-size: 17px; }
.shape .len { fill: #f00000; }
.shape .plain { font-size: 18px; }
.bars .empty > * { height: 32px; padding: 0; background: #fff; }
.bars .empty th { background: #efefef; }
.blank { width: 11px; height: 43px; background: #efefef; }
.marks { position: absolute; left: 980px; top: 15px; width: 130px; height: 235px; fill: none; stroke: #fc3939; stroke-width: 6px; stroke-linecap: round; stroke-linejoin: round; }
.h-track { height: 20px; padding: 4px 0 4px 21px; }
.h-thumb { width: 75%; height: 12px; border-radius: 6px; background: #cbcbcb; }
```
